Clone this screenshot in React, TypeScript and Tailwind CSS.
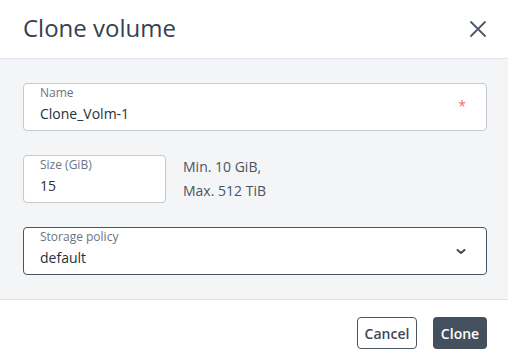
import React from 'react'

const font = { fontFamily: "'Open Sans', 'Noto Sans', sans-serif" }

function Field({ label, value, required, className }: { label: string; value: string; required?: boolean; className?: string }) {
  return (
    <div className={`relative h-[48px] rounded-[4px] border border-[#c5c8cd] bg-white pl-4 pr-3 ${className || ''}`}>
      <div className="pt-[1px] text-[12px] leading-4 text-[#6b7480]">{label}</div>
      <div className="mt-[3px] text-[14px] leading-5 text-[#26313d]">{value}</div>
      {required && (
        <span className="absolute right-[20px] top-[14px] text-[14px] leading-4 text-[#ef6f6f]">*</span>
      )}
    </div>
  )
}

export default function App() {
  return (
    <div className="w-[508px] h-[355px] overflow-hidden bg-white" style={font}>
      <header className="flex h-[59px] items-center justify-between border-b border-[#dde3ec] pl-[23px] pr-[21px]">
        <h1 className="text-[24px] leading-8 text-[#36414f] pb-[2px]">Clone volume</h1>
        <button aria-label="Close" className="text-[#4d5968] mb-[1px]">
          <svg width="18" height="18" viewBox="0 0 18 18" fill="none" stroke="currentColor" strokeWidth={1.8} strokeLinecap="round">
            <path d="M2 2 16 16M16 2 2 16" />
          </svg>
        </button>
      </header>

      <main className="flex flex-col gap-[24px] border-b border-[#dde3ec] bg-[#f4f5f7] pl-[23px] pr-[21px] pt-[24px] pb-[24px]">
        <Field label="Name" value="Clone_Volm-1" required />
        <div className="flex items-start gap-[17px]">
          <Field label="Size (GiB)" value="15" className="w-[143px] shrink-0" />
          <div className="text-[14px] leading-6 text-[#4a5461]">
            <div>Min. 10 GiB,</div>
            <div>Max. 512 TiB</div>
          </div>
        </div>
        <div className="relative h-[48px] rounded-[4px] border border-[#4a5563] bg-white pl-4 pr-3">
          <div className="pt-[1px] text-[12px] leading-4 text-[#6b7480]">Storage policy</div>
          <div className="mt-[3px] text-[14px] leading-5 text-[#26313d]">default</div>
          <svg className="absolute right-[19px] top-[20px] text-[#3e4957]" width="12" height="8" viewBox="0 0 12 8" fill="none" stroke="currentColor" strokeWidth={2} strokeLinecap="round" strokeLinejoin="round">
            <path d="M2.5 2 6 5 9.5 2" />
          </svg>
        </div>
      </main>

      <footer className="flex justify-end gap-[16px] px-[21px] pt-[17px]">
        <button className="h-[32px] w-[60px] rounded-[4px] border border-[#4a5563] bg-white text-[14px] font-semibold text-[#3e4957]">
          Cancel
        </button>
        <button className="h-[32px] w-[54px] rounded-[4px] bg-[#45505e] text-[14px] font-semibold text-white">
          Clone
        </button>
      </footer>
    </div>
  )
}
